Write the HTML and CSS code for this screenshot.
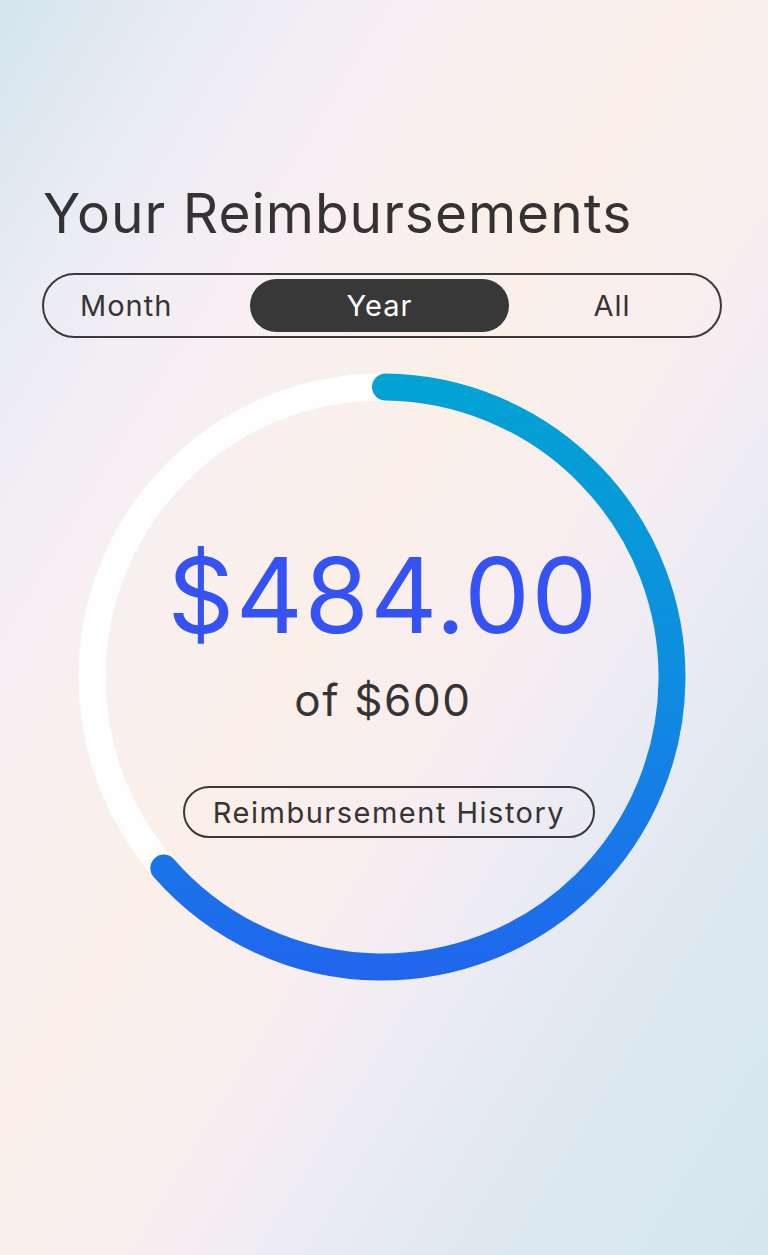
FILE: index.html
```html
<!DOCTYPE html>
<html lang="en">
<head>
<meta charset="utf-8">
<title>Your Reimbursements</title>
<link rel="stylesheet" href="styles.css">
</head>
<body>
<main class="page">
  <h1 class="title">Your Reimbursements</h1>
  <div class="segmented">
    <button class="seg seg-first">Month</button>
    <button class="seg seg-active">Year</button>
    <button class="seg">All</button>
  </div>
  <section class="ring">
    <svg class="ring-svg" viewBox="0 0 608 608" aria-hidden="true">
      <defs>
        <linearGradient id="arcGrad" gradientUnits="userSpaceOnUse" x1="608" y1="0" x2="0" y2="0">
          <stop offset="0" stop-color="#02a3d3"/>
          <stop offset="0.5" stop-color="#0e8de0"/>
          <stop offset="1" stop-color="#2165ee"/>
        </linearGradient>
      </defs>
      <circle class="track" cx="304" cy="304" r="290"/>
      <circle class="arc" cx="304" cy="304" r="290" transform="rotate(-89.3 304 304)"/>
    </svg>
    <div class="ring-content">
      <div class="amount">$484.00</div>
      <div class="limit">of $600</div>
      <button class="history">Reimbursement History</button>
    </div>
  </section>
</main>
</body>
</html>
```
FILE: styles.css
```css
* { box-sizing: border-box; }
html, body { margin: 0; padding: 0; }
body {
  width: 768px;
  height: 1255px;
  overflow: hidden;
  font-family: Inter, "DejaVu Sans", sans-serif;
  color: #363434;
  background: linear-gradient(to bottom right,
    #d3e5ee 0%, #ebecf4 14%, #f7eff3 28%, #fbefe8 45%,
    #f8eef0 58%, #ebebf4 70%, #dde8f1 82%, #d5e6ef 100%);
}
.page {
  padding: 178px 46px 0 42px;
}
.title {
  margin: 0 0 0 1px;
  font-size: 55px;
  font-weight: 400;
  line-height: 70px;
  letter-spacing: 1px;
  color: #343232;
}
.segmented {
  margin-top: 25px;
  height: 65px;
  border: 2px solid #3b3939;
  border-radius: 33px;
  padding: 4px 5px;
  display: grid;
  grid-template-columns: 201px 259px 1fr;
}
.seg {
  border: 0;
  background: none;
  font-family: inherit;
  font-size: 29px;
  letter-spacing: 1px;
  color: #363434;
  padding: 0;
  border-radius: 28px;
  display: flex;
  align-items: center;
  justify-content: center;
}
.seg-first {
  justify-content: flex-start;
  padding-left: 31px;
}
.seg-active {
  background: #393838;
  color: #ffffff;
}
.ring {
  position: relative;
  margin: 35px 0 0 36px;
  width: 608px;
  height: 608px;
}
.ring-svg {
  position: absolute;
  inset: 0;
  width: 608px;
  height: 608px;
}
.track {
  fill: none;
  stroke: #ffffff;
  stroke-opacity: 0.92;
  stroke-width: 27;
}
.arc {
  fill: none;
  stroke: url(#arcGrad);
  stroke-width: 27;
  stroke-linecap: round;
  stroke-dasharray: 1154 2000;
}
.ring-content {
  position: relative;
  display: flex;
  flex-direction: column;
  align-items: center;
  padding-top: 170px;
}
.amount {
  font-size: 104px;
  line-height: 104px;
  color: #3553f4;
  letter-spacing: 1.5px;
  margin-left: 2px;
}
.limit {
  margin-top: 28px;
  font-size: 44px;
  line-height: 50px;
  letter-spacing: 1.6px;
  color: #363333;
  margin-left: 2px;
}
.history {
  margin-top: 61px;
  height: 52px;
  padding: 0 28px;
  border: 2px solid #3b3838;
  border-radius: 26px;
  background: transparent;
  font-family: inherit;
  font-size: 29px;
  letter-spacing: 1.5px;
  color: #363333;
  margin-left: 14px;
}
```
